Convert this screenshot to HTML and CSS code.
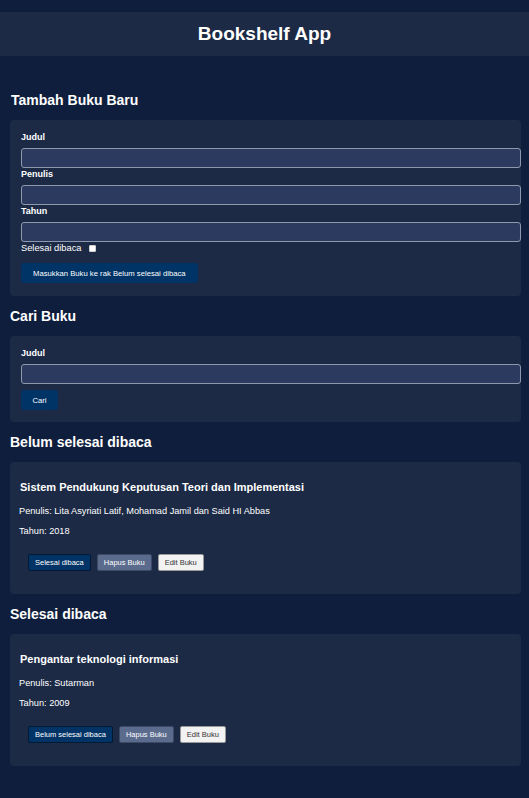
FILE: index.html
```html
<!DOCTYPE html>
<html lang="id">
<head>
<meta charset="utf-8">
<title>Bookshelf App</title>
<link rel="stylesheet" href="styles.css">
</head>
<body>
<header class="app-header">
  <h1 class="app-title">Bookshelf App</h1>
</header>
<main class="main">
  <section>
    <h2 class="section-title first">Tambah Buku Baru</h2>
    <form class="card form-card">
      <div class="field">
        <label class="field-label">Judul</label>
        <input class="text-input" type="text">
      </div>
      <div class="field">
        <label class="field-label">Penulis</label>
        <input class="text-input" type="text">
      </div>
      <div class="field">
        <label class="field-label">Tahun</label>
        <input class="text-input" type="number">
      </div>
      <div class="check-row">
        <label class="check-label">Selesai dibaca</label>
        <input class="check" type="checkbox">
      </div>
      <button class="btn-primary submit" type="button">Masukkan Buku ke rak Belum selesai dibaca</button>
    </form>
  </section>

  <section>
    <h2 class="section-title">Cari Buku</h2>
    <form class="card search-card">
      <div class="field">
        <label class="field-label">Judul</label>
        <input class="text-input" type="text">
      </div>
      <button class="btn-primary search-btn" type="button">Cari</button>
    </form>
  </section>

  <section>
    <h2 class="section-title">Belum selesai dibaca</h2>
    <div class="card book-list">
      <article class="book">
        <h3 class="book-title">Sistem Pendukung Keputusan Teori dan Implementasi</h3>
        <p class="book-meta">Penulis: Lita Asyriati Latif, Mohamad Jamil dan Said HI Abbas</p>
        <p class="book-meta">Tahun: 2018</p>
        <div class="actions">
          <button class="btn btn-blue" type="button">Selesai dibaca</button>
          <button class="btn btn-gray" type="button">Hapus Buku</button>
          <button class="btn btn-white" type="button">Edit Buku</button>
        </div>
      </article>
    </div>
  </section>

  <section>
    <h2 class="section-title">Selesai dibaca</h2>
    <div class="card book-list">
      <article class="book">
        <h3 class="book-title">Pengantar teknologi informasi</h3>
        <p class="book-meta">Penulis: Sutarman</p>
        <p class="book-meta">Tahun: 2009</p>
        <div class="actions">
          <button class="btn btn-blue" type="button">Belum selesai dibaca</button>
          <button class="btn btn-gray" type="button">Hapus Buku</button>
          <button class="btn btn-white" type="button">Edit Buku</button>
        </div>
      </article>
    </div>
  </section>
</main>
</body>
</html>
```

FILE: styles.css
```css
* {
  box-sizing: border-box;
}

html, body {
  margin: 0;
  padding: 0;
  background: #0f1e3c;
  color: #ffffff;
  font-family: "Liberation Sans", Arial, sans-serif;
}

body {
  padding-top: 12px;
  min-height: 798px;
}

.app-header {
  background: #1c2a45;
  height: 44px;
  display: flex;
  align-items: center;
  justify-content: center;
}

.app-title {
  margin: 0;
  font-size: 19px;
  font-weight: 700;
  line-height: 22px;
}

.main {
  padding: 0 8px 0 10px;
}

.section-title {
  margin: 12px 0 12px 0;
  font-size: 14px;
  line-height: 16px;
  font-weight: 700;
}

.section-title.first {
  margin-top: 36px;
  margin-left: 1px;
}

.card {
  background: #1c2a45;
  border-radius: 4px;
}

.form-card {
  padding: 11px 11px 13px;
}

.search-card {
  padding: 11px 11px 12px;
}

.field-label {
  display: block;
  font-size: 9px;
  line-height: 12px;
  font-weight: 700;
}

.text-input {
  display: block;
  width: 500px;
  height: 20px;
  margin: 5px 0 0;
  padding: 2px 5px;
  background: #2b3a5e;
  border: 1px solid #8f99ad;
  border-radius: 3px;
  color: #ffffff;
  font-family: inherit;
  font-size: 9px;
  outline: none;
}

.check-row {
  display: flex;
  align-items: center;
  height: 12px;
}

.check-label {
  font-size: 9.3px;
  line-height: 12px;
}

.check {
  appearance: none;
  -webkit-appearance: none;
  width: 7px;
  height: 7px;
  margin: 0 0 0 8px;
  background: #ffffff;
  border: 1px solid #d0d0d0;
  border-radius: 1px;
}

.btn-primary {
  display: block;
  height: 20px;
  background: #003366;
  color: #ffffff;
  border: none;
  border-radius: 3px;
  font-family: inherit;
  font-size: 7.7px;
  padding: 0 12px;
}

.submit {
  margin-top: 9px;
}

.search-btn {
  margin-top: 6px;
  width: 37px;
  padding: 0;
}

.book-list {
  padding: 18px 9px 23px 9px;
}

.book-title {
  margin: 0 0 0 1px;
  font-size: 11px;
  line-height: 14px;
  font-weight: 700;
}

.book-meta {
  margin: 11px 0 0;
  font-size: 9.2px;
  line-height: 12px;
}

.book-meta + .book-meta {
  margin-top: 8px;
}

.actions {
  display: flex;
  gap: 6px;
  margin: 17px 0 0 9px;
}

.btn {
  height: 17px;
  padding: 0 6px;
  font-family: inherit;
  font-size: 7.5px;
  border-radius: 2px;
  border: 1px solid;
}

.btn-blue {
  background: #003366;
  color: #ffffff;
  border-color: #001a33;
}

.btn-gray {
  background: #5b6b8e;
  color: #ffffff;
  border-color: #3c4a66;
}

.btn-white {
  background: #f2f2f2;
  color: #333333;
  border-color: #9a9a9a;
}
```
